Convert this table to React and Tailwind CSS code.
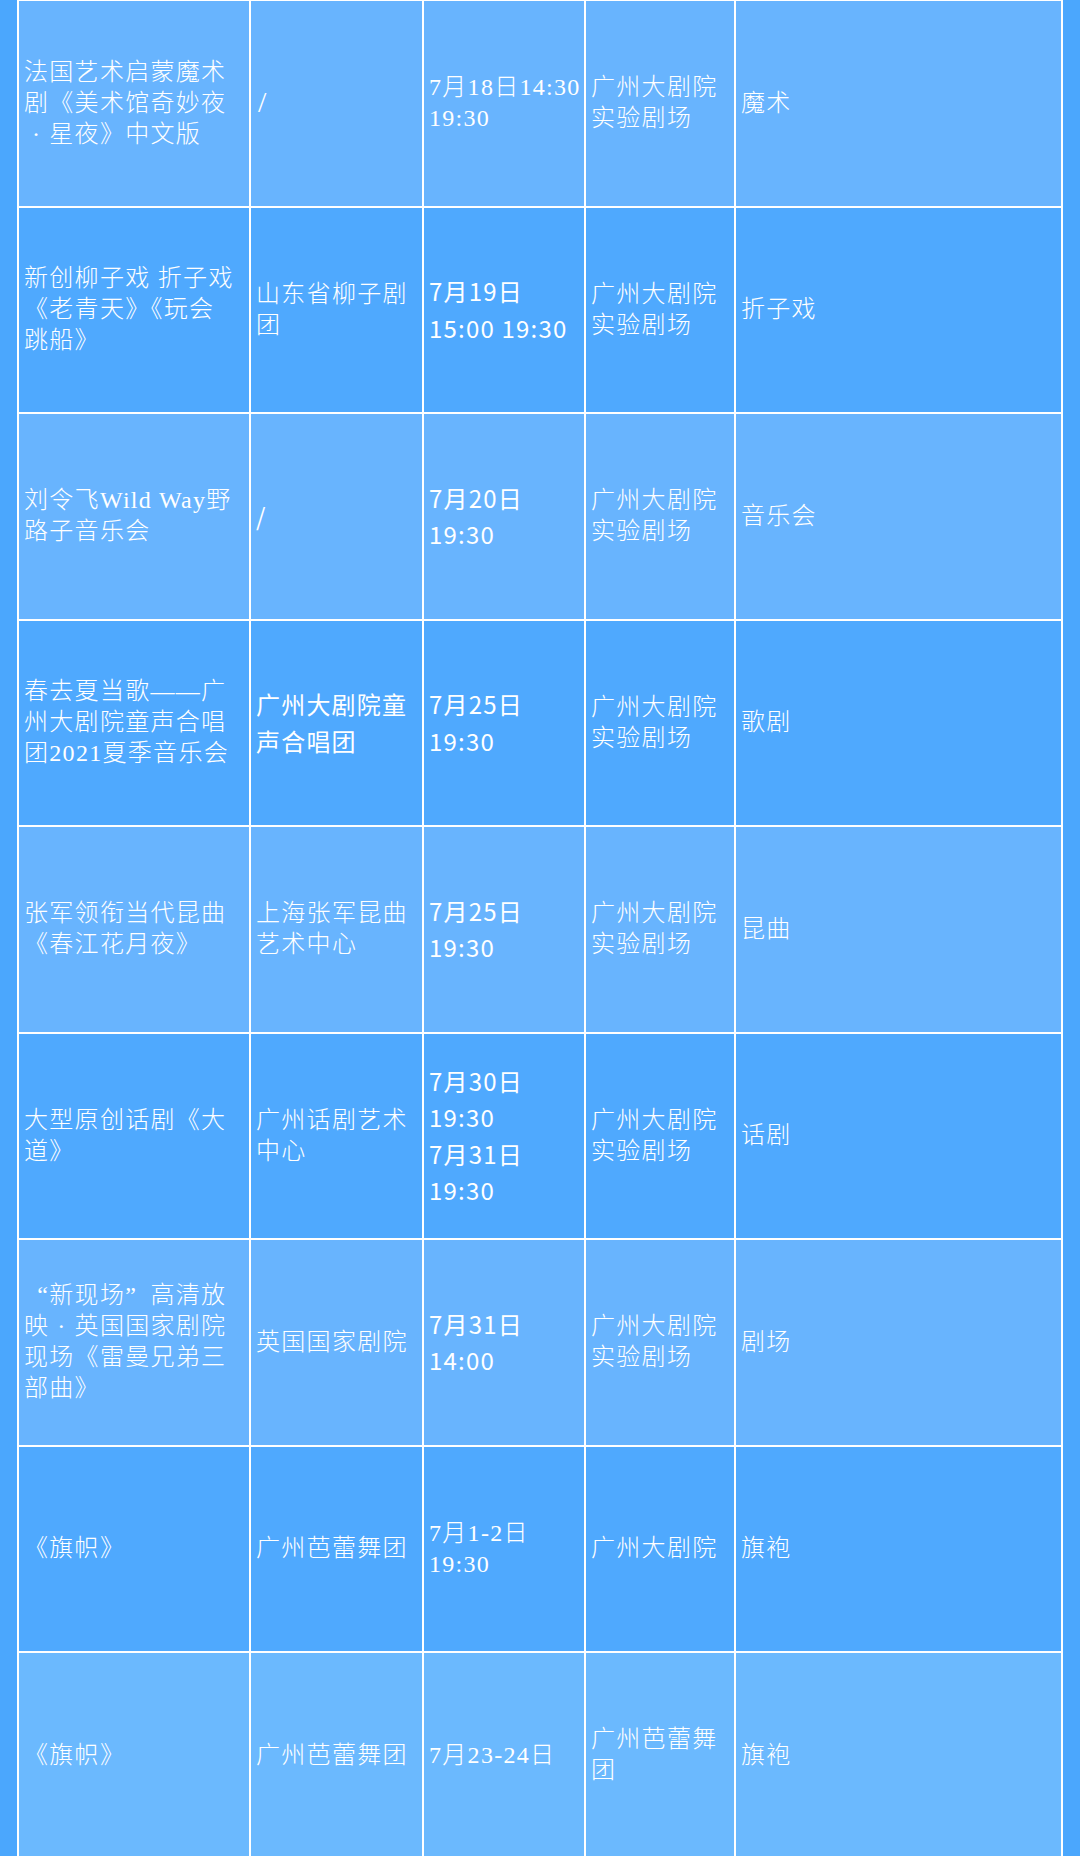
import React from "react";

const S = "serif";
const N = "sans";

const Dot = () => (
  <span className="inline-block w-[25.3px] text-center">·</span>
);
const LQ = () => (
  <span className="inline-block w-[25.3px] text-right">“</span>
);
const RQ = () => (
  <span className="inline-block w-[25.3px] text-left">”</span>
);
const Slash = () => (
  <span className="inline-block text-[30px] leading-[31px] pl-[2px]">/</span>
);

const rows = [
  {
    tone: "light",
    cells: [
      [S, ["法国艺术启蒙魔术", "剧《美术馆奇妙夜", <><Dot />星夜》中文版</>]],
      [S, [<Slash />]],
      [S, ["7月18日14:30", "19:30"]],
      [S, ["广州大剧院", "实验剧场"]],
      [S, ["魔术"]],
    ],
  },
  {
    tone: "dark",
    cells: [
      [S, ["新创柳子戏 折子戏", "《老青天》《玩会", "跳船》"]],
      [S, ["山东省柳子剧", "团"]],
      [N, ["7月19日", "15:00 19:30"]],
      [S, ["广州大剧院", "实验剧场"]],
      [S, ["折子戏"]],
    ],
  },
  {
    tone: "light",
    cells: [
      [S, ["刘令飞Wild Way野", "路子音乐会"]],
      [N, ["/"]],
      [N, ["7月20日", "19:30"]],
      [S, ["广州大剧院", "实验剧场"]],
      [S, ["音乐会"]],
    ],
  },
  {
    tone: "dark",
    cells: [
      [S, ["春去夏当歌——广", "州大剧院童声合唱", "团2021夏季音乐会"]],
      [N, ["广州大剧院童", "声合唱团"]],
      [N, ["7月25日", "19:30"]],
      [S, ["广州大剧院", "实验剧场"]],
      [S, ["歌剧"]],
    ],
  },
  {
    tone: "light",
    cells: [
      [S, ["张军领衔当代昆曲", "《春江花月夜》"]],
      [S, ["上海张军昆曲", "艺术中心"]],
      [N, ["7月25日", "19:30"]],
      [S, ["广州大剧院", "实验剧场"]],
      [S, ["昆曲"]],
    ],
  },
  {
    tone: "dark",
    cells: [
      [S, ["大型原创话剧《大", "道》"]],
      [S, ["广州话剧艺术", "中心"]],
      [N, ["7月30日", "19:30", "7月31日", "19:30"]],
      [S, ["广州大剧院", "实验剧场"]],
      [S, ["话剧"]],
    ],
  },
  {
    tone: "light",
    cells: [
      [S, [<><LQ />新现场<RQ />高清放</>, <>映<Dot />英国国家剧院</>, "现场《雷曼兄弟三", "部曲》"]],
      [S, ["英国国家剧院"]],
      [N, ["7月31日", "14:00"]],
      [S, ["广州大剧院", "实验剧场"]],
      [S, ["剧场"]],
    ],
  },
  {
    tone: "dark",
    cells: [
      [S, ["《旗帜》"]],
      [S, ["广州芭蕾舞团"]],
      [S, ["7月1-2日", "19:30"]],
      [S, ["广州大剧院"]],
      [S, ["旗袍"]],
    ],
  },
  {
    tone: "lighter",
    cells: [
      [S, ["《旗帜》"]],
      [S, ["广州芭蕾舞团"]],
      [S, ["7月23-24日"]],
      [S, ["广州芭蕾舞", "团"]],
      [S, ["旗袍"]],
    ],
  },
];

const toneClass = {
  light: "bg-[#68b4fe]",
  dark: "bg-[#4fa9fe]",
  lighter: "bg-[#6bb9fe]",
};

function Cell({ kind, lines, tone }) {
  const font =
    kind === S
      ? "font-['Liberation_Serif','Noto_Sans_CJK_SC',serif] font-light text-[24px] leading-[31px] tracking-[1.3px]"
      : "font-['Noto_Sans_CJK_SC','Noto_Sans',sans-serif] font-normal text-[24px] leading-[36.5px] tracking-[1.2px]";
  return (
    <div className={`${toneClass[tone]} flex flex-col justify-center px-[5px] text-white ${font}`}>
      {lines.map((l, i) => (
        <div key={i} className="whitespace-nowrap">
          {l}
        </div>
      ))}
    </div>
  );
}

export default function App() {
  return (
    <div className="w-[1080px] h-[1856px] overflow-hidden bg-[#4ba7fd] pl-[17px]">
      <div className="w-[1046px] bg-white pt-[1px] px-[2px] grid grid-cols-[230px_171px_160px_148px_325px] auto-rows-[204.5px] gap-[2px]">
        {rows.map((r, ri) =>
          r.cells.map(([kind, lines], ci) => (
            <Cell key={`${ri}-${ci}`} kind={kind} lines={lines} tone={r.tone} />
          ))
        )}
      </div>
    </div>
  );
}
